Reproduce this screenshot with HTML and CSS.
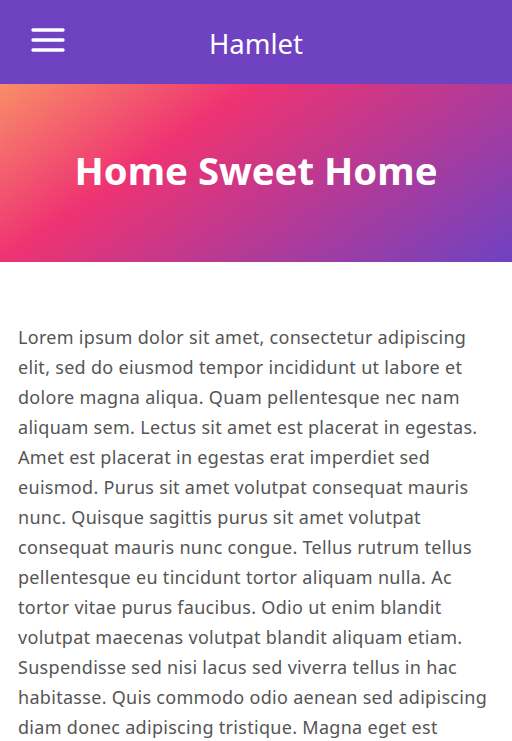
FILE: index.html
```html
<!DOCTYPE html>
<html lang="en">
<head>
<meta charset="utf-8">
<title>Hamlet</title>
<link rel="stylesheet" href="styles.css">
</head>
<body>
<header class="topbar">
  <button class="menu-btn" aria-label="Menu">
    <svg width="34" height="26" viewBox="0 0 34 26"><g stroke="#fff" stroke-width="3.4" stroke-linecap="round"><line x1="2" y1="3" x2="32" y2="3"/><line x1="2" y1="13" x2="32" y2="13"/><line x1="2" y1="23" x2="32" y2="23"/></g></svg>
  </button>
  <div class="brand">Hamlet</div>
</header>
<section class="hero">
  <h1>Home Sweet Home</h1>
</section>
<main class="content">
  <p>Lorem ipsum dolor sit amet, consectetur adipiscing elit, sed do eiusmod tempor incididunt ut labore et dolore magna aliqua. Quam pellentesque nec nam aliquam sem. Lectus sit amet est placerat in egestas. Amet est placerat in egestas erat imperdiet sed euismod. Purus sit amet volutpat consequat mauris nunc. Quisque sagittis purus sit amet volutpat consequat mauris nunc congue. Tellus rutrum tellus pellentesque eu tincidunt tortor aliquam nulla. Ac tortor vitae purus faucibus. Odio ut enim blandit volutpat maecenas volutpat blandit aliquam etiam. Suspendisse sed nisi lacus sed viverra tellus in hac habitasse. Quis commodo odio aenean sed adipiscing diam donec adipiscing tristique. Magna eget est lorem ipsum dolor sit amet consectetur adipiscing.</p>
</main>
</body>
</html>
```
FILE: styles.css
```css
* { box-sizing: border-box; }
html, body { margin: 0; padding: 0; }
body {
  font-family: "Noto Sans", "Open Sans", sans-serif;
  color: #555;
  background: #fff;
}
.topbar {
  position: relative;
  height: 84px;
  background: #6f42c1;
  display: flex;
  align-items: center;
  justify-content: center;
}
.menu-btn {
  position: absolute;
  left: 31px;
  top: 27px;
  padding: 0;
  border: 0;
  background: none;
  display: block;
  line-height: 0;
}
.brand {
  color: #fff;
  font-size: 27.5px;
  margin-top: 2px;
}
.hero {
  height: 178px;
  display: flex;
  align-items: center;
  justify-content: center;
  background: linear-gradient(145deg, #f98e68 0%, #ee3372 33%, #6f42c1 100%);
}
.hero h1 {
  margin: 0;
  color: #fff;
  font-size: 38.3px;
  font-weight: 700;
  margin-top: -6px;
}
.content {
  padding: 60px 20px 20px 18px;
}
.content p {
  margin: 0;
  font-size: 18px;
  line-height: 30px;
  letter-spacing: 0.3px;
}
```
